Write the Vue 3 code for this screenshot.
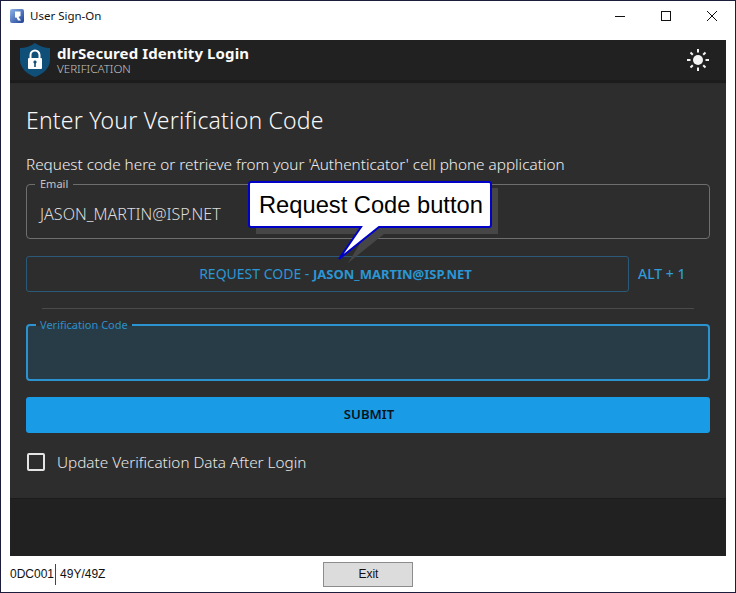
<template>
  <div class="window">
    <div class="titlebar">
      <svg class="app-icon" width="14" height="14" viewBox="0 0 14 14">
        <defs>
          <linearGradient id="ai" x1="0" y1="0" x2="1" y2="1">
            <stop offset="0" stop-color="#8fb4e8" />
            <stop offset="1" stop-color="#1c3f94" />
          </linearGradient>
        </defs>
        <rect width="14" height="14" rx="2" fill="url(#ai)" />
        <path d="M5 2.5h5.5v4.5l-2 1 2.5 3.5H8L6.5 8.5H5z" fill="#fff" />
      </svg>
      <span class="title-text">User Sign-On</span>
      <div class="controls">
        <svg width="12" height="12" viewBox="0 0 12 12"><path d="M1 6.5h10" stroke="#111" stroke-width="1" /></svg>
        <svg width="12" height="12" viewBox="0 0 12 12"><rect x="1.5" y="1.5" width="9" height="9" fill="none" stroke="#111" /></svg>
        <svg width="12" height="12" viewBox="0 0 12 12"><path d="M1 1l10 10M11 1L1 11" stroke="#111" stroke-width="1" /></svg>
      </div>
    </div>

    <div class="app">
      <header class="app-header">
        <svg class="shield" width="32" height="36" viewBox="0 0 32 36">
          <path d="M16 1C12 4 6 6 1 6v12c0 8 7 14 15 17 8-3 15-9 15-17V6c-5 0-11-2-15-5z" fill="#0f4f78" />
          <path d="M11.500 16v-3a4.500 4.500 0 0 1 9 0v3" fill="none" stroke="#fff" stroke-width="2" />
          <rect x="9" y="16" width="14" height="11" rx="1" fill="#fff" />
          <path d="M16 18.500a1.600 1.600 0 0 1 .8 3V25h-1.600v-3.500a1.600 1.600 0 0 1 .8-3z" fill="#0f4f78" />
        </svg>
        <div class="brand">
          <div class="brand-name">dlrSecured Identity Login</div>
          <div class="brand-sub">VERIFICATION</div>
        </div>
        <svg class="sun" width="24" height="24" viewBox="0 0 24 24">
          <circle cx="12" cy="12" r="5" fill="#f4f4f4" />
          <path d="M12 1v3.500M12 19.500V23M1 12h3.500M19.500 12H23M4.500 4.500l2.300 2.300M17.200 17.200l2.300 2.300M4.500 19.500l2.300-2.300M17.200 6.800l2.300-2.300" stroke="#f4f4f4" stroke-width="2" />
        </svg>
      </header>

      <main class="card">
        <h1 class="heading">Enter Your Verification Code</h1>
        <p class="hint">Request code here or retrieve from your 'Authenticator' cell phone application</p>

        <fieldset class="field">
          <legend>Email</legend>
          <span class="field-value">JASON_MARTIN@ISP.NET</span>
        </fieldset>

        <div class="request-row">
          <button class="request-btn">REQUEST CODE - <b>JASON_MARTIN@ISP.NET</b></button>
          <span class="shortcut">ALT + 1</span>
        </div>

        <div class="divider"></div>

        <fieldset class="field field-active">
          <legend>Verification Code</legend>
        </fieldset>

        <button class="submit">SUBMIT</button>

        <label class="check-row">
          <span class="checkbox"></span>
          <span>Update Verification Data After Login</span>
        </label>
      </main>

      <div class="app-footer"></div>
    </div>

    <footer class="statusbar">
      <span class="code">0DC001</span>
      <span class="version">49Y/49Z</span>
      <button class="exit">Exit</button>
    </footer>

    <div class="callout">
      <svg class="callout-art" width="270" height="90" viewBox="0 0 270 90">
        <path d="M8 7h242v46H136l-36 29 18-29H8z" fill="#464646" />
        <path d="M3 1h238a2 2 0 0 1 2 2v41a2 2 0 0 1-2 2H131L91 78l22-32H3a2 2 0 0 1-2-2V3a2 2 0 0 1 2-2z" fill="#fff" stroke="#0000c8" stroke-width="2" />
      </svg>
      <span class="callout-text">Request Code button</span>
    </div>
  </div>
</template>

<script setup>
</script>

<style>
html, body { margin: 0; background: #fff; }
</style>

<style scoped>
.window {
  position: relative;
  box-sizing: border-box;
  width: 736px;
  height: 593px;
  display: flex;
  flex-direction: column;
  background: #fff;
  border: 1px solid #1c1c3c;
  overflow: hidden;
  font-family: "Noto Sans", "Open Sans", sans-serif;
}
.titlebar {
  height: 39px;
  flex: none;
  display: flex;
  align-items: flex-start;
  padding: 8px 0 0 9px;
  box-sizing: border-box;
}
.app-icon { flex: none; }
.title-text {
  margin-left: 6px;
  font-size: 11.5px;
  line-height: 14px;
  color: #111;
}
.controls {
  margin-left: auto;
  display: flex;
  gap: 34px;
  padding-right: 17px;
  padding-top: 1px;
}
.app {
  margin: 0 9px;
  height: 516px;
  flex: none;
  display: flex;
  flex-direction: column;
  background: #1c1c1c;
}
.app-header {
  height: 40px;
  flex: none;
  display: flex;
  align-items: center;
  background: #212121;
  padding: 0 16px 0 9px;
  color: #fff;
}
.shield { flex: none; }
.brand { margin-left: 6px; }
.brand-name {
  font-size: 15px;
  font-weight: 700;
  line-height: 18px;
  letter-spacing: 0.1px;
  color: #fbfbfb;
}
.brand-sub {
  font-size: 11.6px;
  font-weight: 300;
  line-height: 14px;
  color: #c4c4c4;
}
.sun { margin-left: auto; }
.card {
  flex: none;
  height: 416px;
  box-sizing: border-box;
  margin-top: 3px;
  background: #2d2d2d;
  border-top: 1px solid #2a2a2a;
  border-bottom: 1px solid #1c1c1c;
  padding: 0 16px;
  display: flex;
  flex-direction: column;
}
.heading {
  margin: 21px 0 0;
  font-size: 23px;
  line-height: 30px;
  font-weight: 300;
  color: #f8f8f8;
  letter-spacing: 0.2px;
}
.hint {
  margin: 19px 0 0;
  font-size: 15.3px;
  font-weight: 300;
  line-height: 20px;
  color: #f0f0f0;
}
.field {
  box-sizing: border-box;
  margin: 0;
  margin-top: 3px;
  height: 62px;
  padding: 0 13px;
  border: 1px solid #6e6e6e;
  border-radius: 4px;
  min-width: 0;
  display: block;
}
.field legend {
  margin-left: -5px;
  padding: 0 5px;
  font-size: 11px;
  line-height: 14px;
  color: #c4c4c4;
}
.field-value {
  display: block;
  margin-top: 13px;
  font-size: 16.1px;
  font-weight: 300;
  line-height: 20px;
  color: #dcdcdc;
}
.request-row {
  margin-top: 17px;
  display: flex;
  align-items: center;
}
.request-btn {
  box-sizing: border-box;
  width: 603px;
  height: 36px;
  background: transparent;
  border: 1px solid #2a5a78;
  border-radius: 3px;
  color: #2b96d4;
  font-family: inherit;
  font-size: 14px;
  padding: 0 0 2px 16px;
}
.request-btn b {
  font-size: 13px;
  font-weight: 700;
}
.shortcut {
  margin-left: 9px;
  padding-bottom: 1px;
  font-size: 14px;
  font-weight: 500;
  color: #2f9bd8;
}
.divider {
  margin: 16px 16px 0;
  height: 1px;
  background: #4a4a4a;
}
.field-active {
  margin-top: 9px;
  border: 2px solid #2b93d0;
  background: #283c48;
  background-clip: content-box;
  padding: 0;
  height: 63px;
  position: relative;
}
.field-active legend {
  margin-left: 8px;
  padding: 0 4px;
  color: #2b8fc9;
}
.submit {
  box-sizing: border-box;
  margin-top: 16px;
  height: 36px;
  background: #1a9be6;
  border: none;
  border-radius: 3px;
  color: #0a141c;
  font-family: inherit;
  font-size: 13.2px;
  font-weight: 600;
  padding: 0 0 2px 2px;
}
.check-row {
  margin-top: 20px;
  display: flex;
  align-items: center;
  gap: 12px;
  padding-left: 1px;
  font-size: 15.3px;
  font-weight: 300;
  line-height: 18px;
  color: #e8e8e8;
}
.checkbox {
  box-sizing: border-box;
  width: 18px;
  height: 18px;
  border: 2px solid #e4e4e4;
  border-radius: 2px;
  flex: none;
}
.app-footer {
  flex: 1;
  background: #212121;
}
.statusbar {
  flex: 1;
  display: flex;
  align-items: center;
  padding: 0 0 0 9px;
  font-family: "Liberation Sans", Arial, sans-serif;
  font-size: 12px;
  color: #111;
  position: relative;
}
.code {
  padding-right: 1px;
  line-height: 21px;
  border-right: 1px solid #444;
}
.version { margin-left: 4px; }
.exit {
  margin-left: 218px;
  box-sizing: border-box;
  width: 90px;
  height: 25px;
  background: #dcdcdc;
  border: 1px solid #8c8c8c;
  border-radius: 0;
  font-family: inherit;
  font-size: 12px;
  color: #111;
  padding: 0;
}
.callout {
  position: absolute;
  left: 247px;
  top: 180px;
  width: 270px;
  height: 90px;
}
.callout-art {
  position: absolute;
  left: 0;
  top: 0;
}
.callout-text {
  position: absolute;
  left: 11px;
  top: 10px;
  font-family: "Liberation Sans", Arial, sans-serif;
  font-size: 23.7px;
  line-height: 28px;
  color: #000;
  white-space: nowrap;
}
</style>
